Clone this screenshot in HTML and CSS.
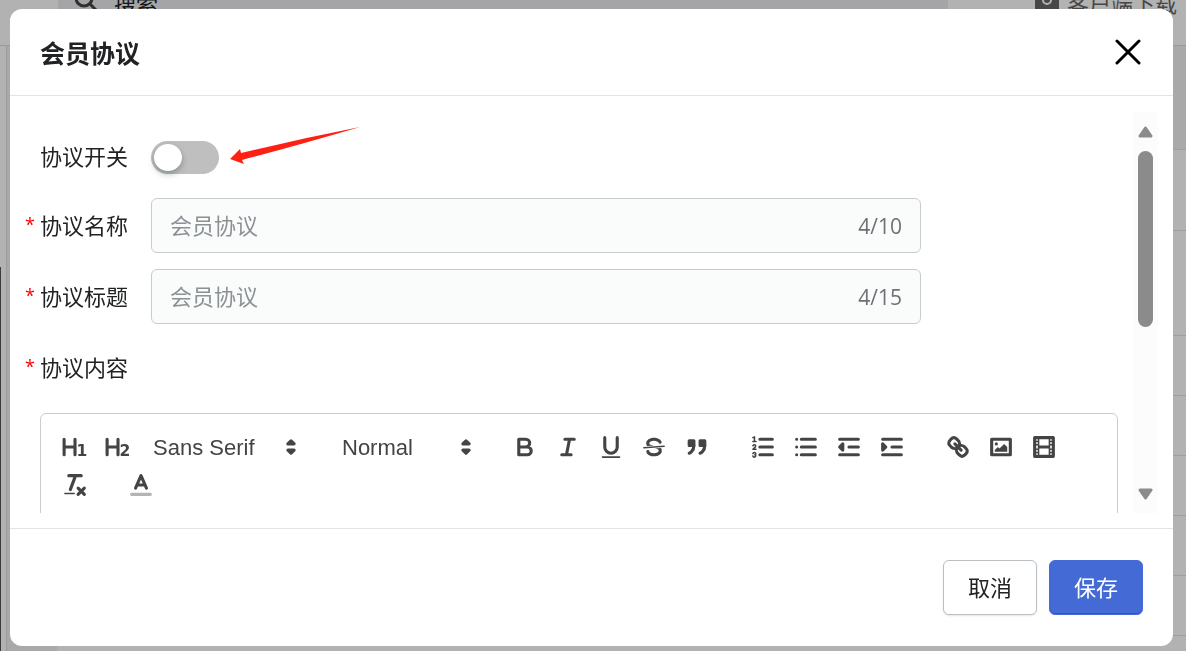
FILE: index.html
```html
<!DOCTYPE html>
<html lang="zh-CN">
<head>
    <meta charset="UTF-8">
    <meta name="viewport" content="width=device-width, initial-scale=1.0">
    <title>会员协议</title>
    <link rel="stylesheet" href="styles.css">
</head>
<body>
    <!-- 底层页面 -->
    <div class="page">
        <div class="topbar">
            <div class="search">
                <svg class="search-icon" viewBox="0 0 24 24"><circle cx="10" cy="10" r="8"/><path d="M16 16l6 6"/></svg>
                <span>搜索</span>
            </div>
            <div class="download">
                <svg class="download-icon" viewBox="0 0 24 24"><rect width="24" height="24" rx="3"/><path d="M8 10a4 4 0 0 0 8 0"/></svg>
                <span>客户端下载</span>
            </div>
        </div>
        <div class="page-main">
            <div class="rail"></div>
            <div class="side"></div>
            <div class="rows">
                <div class="row row-head"></div>
                <div class="row row-first"></div>
                <div class="row row-tall"></div>
                <div class="row"></div>
                <div class="row"></div>
                <div class="row"></div>
                <div class="row"></div>
                <div class="row"></div>
            </div>
        </div>
    </div>

    <!-- 弹窗 -->
    <div class="overlay">
        <div class="modal" role="dialog" aria-labelledby="modal-title">
            <div class="modal-header">
                <h1 id="modal-title">会员协议</h1>
                <button class="close" type="button" aria-label="关闭">
                    <svg viewBox="0 0 26 26"><path d="M2 2l22 22M24 2L2 24"/></svg>
                </button>
            </div>

            <div class="modal-body">
                <div class="form">
                    <div class="form-row switch-row">
                        <label class="label" for="agree-switch">协议开关</label>
                        <input class="switch" id="agree-switch" type="checkbox">
                        <svg class="pointer" viewBox="0 0 132 40"><path d="M1 33L11 23l1 4Q70 13 131 1 70 19 13 34l2 4z"/></svg>
                    </div>
                    <div class="form-row">
                        <label class="label required" for="agree-name">协议名称</label>
                        <div class="field">
                            <input id="agree-name" type="text" placeholder="会员协议" maxlength="10">
                            <span class="count">4/10</span>
                        </div>
                    </div>
                    <div class="form-row">
                        <label class="label required" for="agree-title">协议标题</label>
                        <div class="field">
                            <input id="agree-title" type="text" placeholder="会员协议" maxlength="15">
                            <span class="count">4/15</span>
                        </div>
                    </div>
                    <div class="form-row">
                        <span class="label required">协议内容</span>
                    </div>

                    <div class="editor">
                        <div class="toolbar">
                            <div class="formats">
                                <button type="button" aria-label="标题 1"><svg viewBox="0 0 18 18"><path d="M2 4v10M9 4v10M2 9h7"/><text x="10" y="15">1</text></svg></button>
                                <button type="button" aria-label="标题 2"><svg viewBox="0 0 18 18"><path d="M2 4v10M9 4v10M2 9h7"/><text x="10" y="15">2</text></svg></button>
                                <div class="picker picker-font">
                                    <select aria-label="字体">
                                        <option>Sans Serif</option>
                                        <option>Serif</option>
                                        <option>Monospace</option>
                                    </select>
                                    <svg viewBox="0 0 18 18"><path class="both" d="M7 11l2 2 2-2zM7 7l2-2 2 2z"/></svg>
                                </div>
                            </div>
                            <div class="formats">
                                <div class="picker picker-size">
                                    <select aria-label="字号">
                                        <option>Normal</option>
                                        <option>Small</option>
                                        <option>Large</option>
                                    </select>
                                    <svg viewBox="0 0 18 18"><path class="both" d="M7 11l2 2 2-2zM7 7l2-2 2 2z"/></svg>
                                </div>
                            </div>
                            <div class="formats">
                                <button type="button" aria-label="加粗"><svg viewBox="0 0 18 18"><path d="M5 4h4.500a2.500 2.500 0 0 1 0 5H5zM5 9h5.500a2.500 2.500 0 0 1 0 5H5z"/></svg></button>
                                <button type="button" aria-label="斜体"><svg viewBox="0 0 18 18"><path d="M7 4h6M5 14h6M8 14l2-10"/></svg></button>
                                <button type="button" aria-label="下划线"><svg viewBox="0 0 18 18"><path d="M5 3v6a4 4 0 0 0 8 0V3"/><rect class="fill" x="3" y="15" width="12" height="1" rx=".5"/></svg></button>
                                <button type="button" aria-label="删除线"><svg viewBox="0 0 18 18"><path class="thin" d="M15.500 8.500l-13 1"/><path class="fill" d="M9.007,8C6.542,7.791,6,7.519,6,6.5,6,5.792,7.283,5,9,5c1.571,0,2.765.679,2.969,1.309a1,1,0,0,0,1.9-.617C13.356,4.106,11.354,3,9,3,6.2,3,4,4.538,4,6.5a3.2,3.2,0,0,0,.5,1.843Z"/><path class="fill" d="M8.984,10C11.457,10.208,12,10.479,12,11.5c0,0.708-1.283,1.5-3,1.5-1.571,0-2.765-.679-2.969-1.309a1,1,0,1,0-1.9.617C4.644,13.894,6.646,15,9,15c2.8,0,5-1.538,5-3.5a3.2,3.2,0,0,0-.5-1.843Z"/></svg></button>
                                <button type="button" aria-label="引用"><svg viewBox="0 0 18 18"><path class="both" d="M4 5h3v3H4zM11 5h3v3h-3z"/><path class="both" d="M7 8c0 4.031-3 5-3 5M14 8c0 4.031-3 5-3 5"/></svg></button>
                            </div>
                            <div class="formats">
                                <button type="button" aria-label="有序列表"><svg viewBox="0 0 18 18"><path d="M7 4h8M7 9h8M7 14h8"/><path class="thin" d="M2.500 5.500h2M2.500 3l1-.5v3M4.5,10.5h-2c0-.234,1.85-1.076,1.85-2.234A0.959,0.959,0,0,0,2.5,8.156M2.5,14.846a0.959,0.959,0,0,0,1.85-.109A0.7,0.7,0,0,0,3.75,14a0.688,0.688,0,0,0,.6-0.736,0.959,0.959,0,0,0-1.85-.109"/></svg></button>
                                <button type="button" aria-label="无序列表"><svg viewBox="0 0 18 18"><path d="M6 4h9M6 9h9M6 14h9"/><path d="M3 4h0M3 9h0M3 14h0"/></svg></button>
                                <button type="button" aria-label="减少缩进"><svg viewBox="0 0 18 18"><path d="M3 4h12M3 14h12M9 9h6"/><path class="both" d="M5 7v4L3 9z"/></svg></button>
                                <button type="button" aria-label="增加缩进"><svg viewBox="0 0 18 18"><path d="M3 4h12M3 14h12M9 9h6"/><path class="both" d="M3 7v4l2-2z"/></svg></button>
                            </div>
                            <div class="formats">
                                <button type="button" aria-label="链接"><svg viewBox="0 0 18 18"><path d="M7 7l4 4"/><path d="M8.9,4.577a3.476,3.476,0,0,1,.36,4.679A3.476,3.476,0,0,1,4.577,8.9C3.185,7.5,2.035,6.4,4.217,4.217S7.5,3.185,8.9,4.577Z"/><path d="M13.423,9.1a3.476,3.476,0,0,0-4.679-.36,3.476,3.476,0,0,0,.36,4.679c1.392,1.392,2.5,2.542,4.679.36S14.815,10.5,13.423,9.1Z"/></svg></button>
                                <button type="button" aria-label="图片"><svg viewBox="0 0 18 18"><rect x="3" y="4" width="12" height="10"/><circle class="fill" cx="6" cy="7" r="1"/><path class="fill" d="M5 12v-1l2-2 1 1 3-3 2 2v3z"/></svg></button>
                                <button type="button" aria-label="视频"><svg viewBox="0 0 18 18"><rect x="3" y="3" width="12" height="12"/><path class="fill" d="M5 3h1v12H5zM12 3h1v12h-1zM5 8h8v2H5zM3 5h3v1H3zM3 7h3v1H3zM3 10h3v1H3zM3 12h3v1H3zM12 5h3v1h-3zM12 7h3v1h-3zM12 10h3v1h-3zM12 12h3v1h-3z"/></svg></button>
                            </div>
                            <div class="formats">
                                <button type="button" aria-label="清除格式"><svg viewBox="0 0 18 18"><path d="M5 3h8M6 12l3.350-9M11 11l4 4M15 11l-4 4"/><rect class="fill" x="2" y="14" width="7" height="1" rx=".5"/></svg></button>
                            </div>
                            <div class="formats">
                                <button type="button" aria-label="文字颜色"><svg viewBox="0 0 18 18"><path class="swatch" d="M3 15h12"/><path d="M5.500 11L9 3l3.500 8M11.630 9H6.380"/></svg></button>
                            </div>
                        </div>
                        <div class="editor-content" contenteditable="true"></div>
                    </div>
                </div>

                <div class="scrollbar" aria-hidden="true">
                    <svg viewBox="0 0 17 12"><path d="M8.500 2L14 10H3z"/></svg>
                    <div class="thumb"></div>
                    <svg viewBox="0 0 17 12"><path d="M8.500 10L14 2H3z"/></svg>
                </div>
            </div>

            <div class="modal-footer">
                <button class="btn" type="button">取消</button>
                <button class="btn btn-primary" type="button">保存</button>
            </div>
        </div>
    </div>
</body>
</html>
```
FILE: styles.css
```css
* {
    box-sizing: border-box;
}
body {
    margin: 0;
    height: 100vh;
    overflow: hidden;
    font-family: "Noto Sans CJK SC", sans-serif;
    font-size: 22px;
    color: #202223;
}
button, input, select {
    font: inherit;
    color: inherit;
}

/* 底层页面 */
.page {
    display: flex;
    flex-direction: column;
    height: 100vh;
    overflow: hidden;
}
.topbar {
    display: flex;
    flex: none;
    justify-content: space-between;
    height: 46px;
    padding: 0 9px 0 58px;
    border-bottom: 1px solid #dcdcdc;
    background: #fff;
    line-height: 4px;
}
.search {
    display: flex;
    width: 80%;
    max-width: 890px;
    padding-left: 16px;
    gap: 16px;
    background: #ecedf1;
}
.search-icon {
    width: 24px;
    height: 24px;
    margin-top: -12px;
    fill: none;
    stroke: #444;
    stroke-width: 3;
}
.download {
    display: flex;
    gap: 8px;
    color: #666;
}
.download-icon {
    width: 24px;
    height: 24px;
    margin-top: -10px;
    fill: #666;
}
.download-icon path {
    fill: none;
    stroke: #fff;
    stroke-width: 2;
}
.page-main {
    display: flex;
    flex: 1;
    min-height: 0;
    overflow: hidden;
}
.rail {
    width: 7px;
    border-right: 1px solid #ddd;
    background: linear-gradient(#555, #555) 0 221px / 1px 100% no-repeat #fff;
}
.side {
    width: 50px;
    background: #f3f3f3;
}
.rows {
    flex: 1;
    background: #fff;
}
.row {
    height: 60px;
    border-bottom: 1px solid #e2e2e2;
}
.row-head {
    height: 104px;
    background: #f3f3f3;
}
.row-first {
    height: 81px;
}
.row-tall {
    height: 105px;
}

/* 弹窗 */
.overlay {
    position: fixed;
    inset: 0;
    display: flex;
    padding: 9px 13px 5px 10px;
    background: rgba(0, 0, 0, 0.3);
}
.modal {
    display: flex;
    flex: 1;
    flex-direction: column;
    min-width: 0;
    overflow: hidden;
    border-radius: 12px;
    background: #fff;
}
.modal-header {
    display: flex;
    align-items: center;
    justify-content: space-between;
    padding: 25px 32px 25px 30px;
    border-bottom: 1px solid #e1e3e5;
}
.modal-header h1 {
    margin: 0;
    font-size: 25px;
    line-height: 36px;
}
.close {
    display: flex;
    padding: 0;
    border: none;
    background: none;
    cursor: pointer;
}
.close svg {
    width: 26px;
    height: 26px;
    fill: none;
    stroke: #000;
    stroke-width: 3;
    stroke-linecap: round;
}
.modal-body {
    display: flex;
    flex: 1;
    min-height: 0;
    padding: 16px 15px 15px;
}
.form {
    flex: 1;
    min-width: 0;
    overflow: hidden;
    padding: 20px 15px 0 0;
}
.form-row {
    display: flex;
    align-items: center;
    height: 55px;
    margin-bottom: 16px;
}
.switch-row {
    height: 50px;
}
.label {
    display: flex;
    flex: none;
    width: 126px;
    padding: 0 0 4px 15px;
    line-height: 32px;
}
.required {
    padding-left: 0;
}
.required::before {
    content: "*";
    width: 15px;
    color: #f00;
    font-family: "Open Sans", sans-serif;
    font-size: 18px;
}
.switch {
    flex: none;
    width: 68px;
    height: 33px;
    margin: 0;
    padding: 3px;
    appearance: none;
    border-radius: 17px;
    background: #bfbfbf;
    cursor: pointer;
}
.switch::before {
    content: "";
    display: block;
    width: 28px;
    height: 27px;
    border-radius: 50%;
    background: #fff;
    box-shadow: 0 3px 6px rgba(0, 35, 11, 0.3);
}
.switch:checked {
    background: #446bd5;
}
.switch:checked::before {
    margin-left: auto;
}
.pointer {
    width: 132px;
    height: 40px;
    margin: -22px 0 0 10px;
    fill: #fe2113;
}
.field {
    display: flex;
    flex: 1;
    align-items: center;
    max-width: 770px;
    height: 55px;
    padding: 0 18px;
    border: 1px solid #c9cccf;
    border-radius: 6px;
    background: #fafbfb;
}
.field input {
    flex: 1;
    min-width: 0;
    padding: 0 0 4px;
    border: none;
    outline: none;
    background: none;
}
.field input::placeholder {
    color: #8c9196;
    opacity: 1;
}
.count {
    color: #6d7175;
    font-family: "Open Sans", sans-serif;
    font-size: 21px;
}

/* 编辑器 */
.editor {
    margin: 18px 0 0 15px;
    border: 1px solid #ccc;
    border-radius: 6px;
}
.toolbar {
    display: flex;
    flex-wrap: wrap;
    column-gap: 23px;
    padding: 14px 12px;
    color: #444;
    font-family: "Liberation Sans", Arial, sans-serif;
}
.formats {
    display: flex;
}
.toolbar button {
    display: flex;
    align-items: center;
    justify-content: center;
    width: 43px;
    height: 38px;
    padding: 0;
    border: none;
    background: none;
    cursor: pointer;
}
.toolbar svg {
    width: 28px;
    height: 28px;
    fill: none;
    stroke: #444;
    stroke-width: 2;
    stroke-linecap: round;
    stroke-linejoin: round;
}
.toolbar .fill {
    fill: #444;
    stroke: none;
}
.toolbar .both {
    fill: #444;
}
.toolbar .thin {
    stroke-width: 1;
}
.toolbar .swatch {
    opacity: 0.4;
}
.toolbar text {
    fill: #444;
    stroke: none;
    font-family: "DejaVu Sans", sans-serif;
    font-size: 10px;
    font-weight: bold;
}
.picker {
    position: relative;
    height: 38px;
}
.picker-font {
    width: 166px;
}
.picker-size {
    width: 152px;
}
.picker select {
    width: 100%;
    height: 100%;
    padding: 0 30px 0 14px;
    appearance: none;
    border: none;
    background: none;
}
.picker svg {
    position: absolute;
    top: 5px;
    right: 0;
    pointer-events: none;
}
.editor-content {
    min-height: 300px;
}

.scrollbar {
    display: flex;
    flex: none;
    flex-direction: column;
    align-items: center;
    width: 25px;
    padding: 14px 0 13px;
    background: #fcfcfc;
}
.scrollbar svg {
    width: 17px;
    height: 12px;
    fill: #8b8b8b;
    stroke: #8b8b8b;
    stroke-width: 3;
    stroke-linejoin: round;
}
.thumb {
    width: 15px;
    height: 47%;
    margin: 13px 0 auto;
    border-radius: 8px;
    background: #8b8b8b;
}

.modal-footer {
    display: flex;
    justify-content: flex-end;
    gap: 12px;
    padding: 31px 30px;
    border-top: 1px solid #e1e3e5;
}
.btn {
    height: 55px;
    padding: 0 24px 4px;
    border: 1px solid #babfc3;
    border-radius: 6px;
    background: #fff;
    box-shadow: 0 1px 2px rgba(0, 0, 0, 0.1);
    cursor: pointer;
}
.btn-primary {
    border-color: #446bd5;
    background: #446bd5;
    box-shadow: inset 0 -1px 0 #3156b8;
    color: #fff;
}
```
